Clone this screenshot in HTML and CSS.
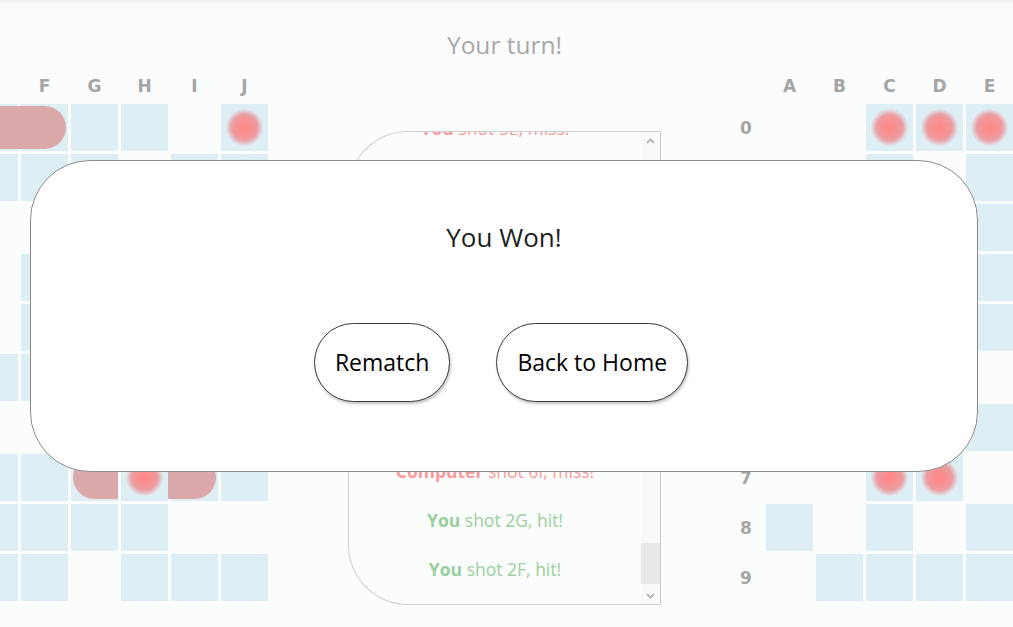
FILE: index.html
```html
<!DOCTYPE html>
<html lang="en">
<head>
<meta charset="utf-8">
<title>Battleship</title>
<link rel="stylesheet" href="styles.css">
</head>
<body>
<div class="topshade"></div>
<h1 class="turn">Your turn!</h1>
<main class="game">
  <section class="board">
    <div class="corner"></div>
    <div class="colh">A</div><div class="colh">B</div><div class="colh">C</div><div class="colh">D</div><div class="colh">E</div><div class="colh">F</div><div class="colh">G</div><div class="colh">H</div><div class="colh">I</div><div class="colh">J</div>
    <div class="rowh">0</div><div class="w"></div><div class="w"></div><div class="s sl"></div><div class="s"></div><div class="s"></div><div class="s sr"></div><div class="w"></div><div class="w"></div><div class="e"></div><div class="h"></div>
    <div class="rowh">1</div><div class="w"></div><div class="e"></div><div class="w"></div><div class="w"></div><div class="w"></div><div class="w"></div><div class="w"></div><div class="e"></div><div class="w"></div><div class="h"></div>
    <div class="rowh">2</div><div class="w"></div><div class="w"></div><div class="e"></div><div class="w"></div><div class="e"></div><div class="e"></div><div class="w"></div><div class="w"></div><div class="w"></div><div class="h"></div>
    <div class="rowh">3</div><div class="w"></div><div class="w"></div><div class="w"></div><div class="e"></div><div class="e"></div><div class="w"></div><div class="w"></div><div class="w"></div><div class="w"></div><div class="w"></div>
    <div class="rowh">4</div><div class="e"></div><div class="w"></div><div class="w"></div><div class="w"></div><div class="e"></div><div class="w"></div><div class="w"></div><div class="s sl"></div><div class="s sr"></div><div class="w"></div>
    <div class="rowh">5</div><div class="w"></div><div class="w"></div><div class="w"></div><div class="w"></div><div class="w"></div><div class="w"></div><div class="w"></div><div class="w"></div><div class="w"></div><div class="w"></div>
    <div class="rowh">6</div><div class="w"></div><div class="e"></div><div class="w"></div><div class="w"></div><div class="e"></div><div class="e"></div><div class="w"></div><div class="w"></div><div class="e"></div><div class="w"></div>
    <div class="rowh">7</div><div class="w"></div><div class="w"></div><div class="w"></div><div class="e"></div><div class="w"></div><div class="w"></div><div class="s sl"></div><div class="h"></div><div class="s sr"></div><div class="w"></div>
    <div class="rowh">8</div><div class="w"></div><div class="w"></div><div class="e"></div><div class="w"></div><div class="w"></div><div class="w"></div><div class="w"></div><div class="w"></div><div class="e"></div><div class="e"></div>
    <div class="rowh">9</div><div class="w"></div><div class="w"></div><div class="w"></div><div class="w"></div><div class="w"></div><div class="w"></div><div class="e"></div><div class="w"></div><div class="w"></div><div class="w"></div>
  </section>

  <section class="log">
    <div class="log-list">
      <p class="hit"><b>You</b> shot 2F, hit!</p>
      <p class="hit"><b>You</b> shot 2G, hit!</p>
      <p class="miss"><b>Computer</b> shot 6I, miss!</p>
      <p class="miss"><b>You</b> shot 7E, miss!</p>
      <p class="hit"><b>You</b> shot 7D, hit!</p>
      <p class="hit"><b>You</b> shot 7C, hit!</p>
      <p class="miss"><b>Computer</b> shot 8I, miss!</p>
      <p class="miss"><b>You</b> shot 9A, miss!</p>
      <p class="miss"><b>Computer</b> shot 8J, miss!</p>
      <p class="miss"><b>You</b> shot 5E, miss!</p>
      <p class="hit"><b>Computer</b> shot 7H, hit!</p>
      <p class="hit"><b>You</b> shot 0E, hit!</p>
      <p class="hit"><b>You</b> shot 0D, hit!</p>
      <p class="miss"><b>Computer</b> shot 6F, miss!</p>
      <p class="hit"><b>You</b> shot 0C, hit!</p>
      <p class="miss"><b>Computer</b> shot 6E, miss!</p>
      <p class="miss"><b>You</b> shot 8D, miss!</p>
      <p class="hit"><b>Computer</b> shot 2J, hit!</p>
      <p class="hit"><b>Computer</b> shot 1J, hit!</p>
      <p class="hit"><b>Computer</b> shot 0J, hit!</p>
      <p class="miss"><b>You</b> shot 8B, miss!</p>
      <p class="miss"><b>Computer</b> shot 0I, miss!</p>
      <p class="miss"><b>You</b> shot 7B, miss!</p>
      <p class="miss"><b>Computer</b> shot 1H, miss!</p>
      <p class="miss"><b>You</b> shot 7A, miss!</p>
      <p class="miss"><b>Computer</b> shot 9G, miss!</p>
      <p class="miss"><b>You</b> shot 9A, miss!</p>
      <p class="miss"><b>Computer</b> shot 2E, miss!</p>
      <p class="miss"><b>You</b> shot 6C, miss!</p>
      <p class="miss"><b>Computer</b> shot 3D, miss!</p>
      <p class="miss"><b>You</b> shot 1D, miss!</p>
      <p class="miss"><b>Computer</b> shot 3E, miss!</p>
      <p class="miss"><b>You</b> shot 1B, miss!</p>
      <p class="miss"><b>Computer</b> shot 4A, miss!</p>
      <p class="miss"><b>You</b> shot 1A, miss!</p>
      <p class="miss"><b>Computer</b> shot 4E, miss!</p>
      <p class="miss"><b>You</b> shot 0B, miss!</p>
      <p class="miss"><b>Computer</b> shot 2C, miss!</p>
      <p class="miss"><b>You</b> shot 0A, miss!</p>
      <p class="miss"><b>Computer</b> shot 1B, miss!</p>
      <p class="miss"><b>You</b> shot 3D, miss!</p>
      <p class="miss"><b>Computer</b> shot 6B, miss!</p>
      <p class="miss"><b>You</b> shot 4F, miss!</p>
      <p class="miss"><b>Computer</b> shot 7D, miss!</p>
      <p class="miss"><b>You</b> shot 5D, miss!</p>
      <p class="miss"><b>Computer</b> shot 8C, miss!</p>
      <p class="miss"><b>You</b> shot 9J, miss!</p>
      <p class="miss"><b>Computer</b> shot 8I, miss!</p>
      <p class="miss"><b>You</b> shot 3H, miss!</p>
      <p class="miss"><b>Computer</b> shot 9G, miss!</p>
      <p class="hit"><b>You</b> shot 5I, hit!</p>
      <p class="hit"><b>You</b> shot 5H, hit!</p>
      <p class="miss"><b>Computer</b> shot 5A, miss!</p>
      <p class="miss"><b>You</b> shot 6G, miss!</p>
      <p class="miss"><b>Computer</b> shot 2I, miss!</p>
      <p class="miss"><b>You</b> shot 8H, miss!</p>
      <p class="miss"><b>Computer</b> shot 3C, miss!</p>
      <p class="hit"><b>You</b> shot 2H, hit!</p>
      <p class="miss"><b>Computer</b> shot 9B, miss!</p>
      <p class="miss"><b>You</b> shot 4B, miss!</p>
      <p class="miss"><b>Computer</b> shot 7A, miss!</p>
      <p class="miss"><b>You</b> shot 2A, miss!</p>
      <p class="miss"><b>Computer</b> shot 5F, miss!</p>
      <p class="miss"><b>You</b> shot 6J, miss!</p>
      <p class="miss"><b>Computer</b> shot 1D, miss!</p>
      <p class="miss"><b>You</b> shot 3J, miss!</p>
      <p class="miss"><b>Computer</b> shot 4D, miss!</p>
      <p class="miss"><b>You</b> shot 8F, miss!</p>
      <p class="miss"><b>Computer</b> shot 0A, miss!</p>
      <p class="miss"><b>You</b> shot 1F, miss!</p>
      <p class="miss"><b>Computer</b> shot 9C, miss!</p>
      <p class="miss"><b>You</b> shot 4I, miss!</p>
      <p class="miss"><b>Computer</b> shot 3G, miss!</p>
      <p class="miss"><b>You</b> shot 0G, miss!</p>
      <p class="miss"><b>Computer</b> shot 6H, miss!</p>
      <p class="miss"><b>You</b> shot 9E, miss!</p>
      <p class="miss"><b>Computer</b> shot 1A, miss!</p>
      <p class="miss"><b>You</b> shot 7I, miss!</p>
      <p class="miss"><b>Computer</b> shot 8B, miss!</p>
      <p class="miss"><b>You</b> shot 3A, miss!</p>
      <p class="miss"><b>Computer</b> shot 4J, miss!</p>
      <p class="miss"><b>You</b> shot 6D, miss!</p>
      <p class="miss"><b>Computer</b> shot 2B, miss!</p>
      <p class="miss"><b>You</b> shot 5B, miss!</p>
      <p class="miss"><b>Computer</b> shot 7F, miss!</p>
      <p class="miss"><b>You</b> shot 2D, miss!</p>
      <p class="miss"><b>Computer</b> shot 5C, miss!</p>
      <p class="miss"><b>You</b> shot 4E, miss!</p>
      <p class="miss"><b>Computer</b> shot 0H, miss!</p>
      <p class="miss"><b>You</b> shot 8G, miss!</p>
      <p class="miss"><b>Computer</b> shot 3I, miss!</p>
      <p class="miss"><b>You</b> shot 1H, miss!</p>
      <p class="miss"><b>Computer</b> shot 9E, miss!</p>
      <p class="miss"><b>You</b> shot 3F, miss!</p>
      <p class="miss"><b>Computer</b> shot 5G, miss!</p>
      <p class="miss"><b>You</b> shot 9H, miss!</p>
      <p class="miss"><b>Computer</b> shot 8A, miss!</p>
      <p class="miss"><b>You</b> shot 6A, miss!</p>
      <p class="miss"><b>Computer</b> shot 1F, miss!</p>
      <p class="miss"><b>You</b> shot 4C, miss!</p>
      <p class="miss"><b>Computer</b> shot 2G, miss!</p>
      <p class="miss"><b>You</b> shot 5J, miss!</p>
    </div>
    <div class="scrollbar" aria-hidden="true">
      <span class="sb-btn"><svg width="9" height="6" viewBox="0 0 9 6"><polyline points="1,5 4.5,1.5 8,5" fill="none" stroke="#b9b9b9" stroke-width="2"/></svg></span>
      <div class="sb-track"><div class="sb-thumb"></div></div>
      <span class="sb-btn"><svg width="9" height="6" viewBox="0 0 9 6"><polyline points="1,1 4.5,4.5 8,1" fill="none" stroke="#b9b9b9" stroke-width="2"/></svg></span>
    </div>
  </section>

  <section class="board right">
    <div class="corner"></div>
    <div class="colh">A</div><div class="colh">B</div><div class="colh">C</div><div class="colh">D</div><div class="colh">E</div><div class="colh">F</div><div class="colh">G</div><div class="colh">H</div><div class="colh">I</div><div class="colh">J</div>
    <div class="rowh">0</div><div class="e"></div><div class="e"></div><div class="h"></div><div class="h"></div><div class="h"></div><div class="w"></div><div class="e"></div><div class="w"></div><div class="w"></div><div class="w"></div>
    <div class="rowh">1</div><div class="e"></div><div class="e"></div><div class="w"></div><div class="e"></div><div class="w"></div><div class="e"></div><div class="w"></div><div class="e"></div><div class="w"></div><div class="w"></div>
    <div class="rowh">2</div><div class="e"></div><div class="w"></div><div class="w"></div><div class="e"></div><div class="w"></div><div class="h"></div><div class="h"></div><div class="h"></div><div class="w"></div><div class="w"></div>
    <div class="rowh">3</div><div class="e"></div><div class="w"></div><div class="w"></div><div class="e"></div><div class="w"></div><div class="e"></div><div class="w"></div><div class="e"></div><div class="w"></div><div class="e"></div>
    <div class="rowh">4</div><div class="w"></div><div class="e"></div><div class="e"></div><div class="w"></div><div class="w"></div><div class="e"></div><div class="w"></div><div class="w"></div><div class="e"></div><div class="w"></div>
    <div class="rowh">5</div><div class="w"></div><div class="e"></div><div class="w"></div><div class="e"></div><div class="e"></div><div class="w"></div><div class="w"></div><div class="h"></div><div class="h"></div><div class="e"></div>
    <div class="rowh">6</div><div class="e"></div><div class="w"></div><div class="e"></div><div class="e"></div><div class="w"></div><div class="w"></div><div class="e"></div><div class="w"></div><div class="w"></div><div class="e"></div>
    <div class="rowh">7</div><div class="e"></div><div class="e"></div><div class="h"></div><div class="h"></div><div class="e"></div><div class="w"></div><div class="w"></div><div class="w"></div><div class="e"></div><div class="w"></div>
    <div class="rowh">8</div><div class="w"></div><div class="e"></div><div class="w"></div><div class="e"></div><div class="w"></div><div class="e"></div><div class="e"></div><div class="w"></div><div class="w"></div><div class="w"></div>
    <div class="rowh">9</div><div class="e"></div><div class="w"></div><div class="w"></div><div class="w"></div><div class="w"></div><div class="w"></div><div class="w"></div><div class="e"></div><div class="e"></div><div class="w"></div>
  </section>
</main>

<div class="modal" role="dialog">
  <h2 class="modal-title">You Won!</h2>
  <div class="actions">
    <button class="btn" type="button">Rematch</button>
    <button class="btn" type="button">Back to Home</button>
  </div>
</div>
</body>
</html>
```

FILE: styles.css
```css
html, body {
  margin: 0;
  padding: 0;
  overflow: hidden;
  height: 100%;
}

body {
  background: #fbfdfc;
  font-family: "Open Sans", "Noto Sans", sans-serif;
}

.topshade {
  height: 6px;
  background: linear-gradient(#eff1f1, #fbfdfc);
}

.turn {
  margin: 0;
  height: 65px;
  box-sizing: border-box;
  padding-top: 24px;
  padding-right: 4px;
  line-height: 30px;
  font-size: 24.5px;
  font-weight: 400;
  color: #a8a8a8;
  text-align: center;
}

.game {
  display: flex;
  align-items: flex-start;
  margin-left: -279px;
  width: max-content;
}

.board {
  flex: none;
  display: grid;
  grid-template-columns: repeat(11, 47px);
  grid-template-rows: 30px repeat(10, 47px);
  gap: 3px;
  margin-right: 80px;
}

.board.right {
  margin-right: 0;
}

.colh,
.rowh {
  font-family: "DejaVu Sans", Verdana, sans-serif;
  font-weight: bold;
  font-size: 17px;
  color: #a5a5a5;
  display: flex;
  align-items: center;
  justify-content: center;
}

.rowh {
  padding-left: 13px;
}

.w {
  background: #deeef5;
}

.e {
  background: transparent;
}

.h {
  background:
    radial-gradient(circle closest-side, #ff8888 0, #f98e8f 25%, #eb9ea2 55%, rgba(222, 238, 245, 0) 80%),
    #deeef5;
}

.s {
  position: relative;
  background: #deeef5;
}

.s::before {
  content: "";
  position: absolute;
  top: 2px;
  bottom: 2px;
  left: -3px;
  right: 0;
  background: #dba9aa;
}

.s.sl::before {
  left: 2px;
  border-radius: 22px 0 0 22px;
}

.s.sr::before {
  right: 2px;
  border-radius: 0 22px 22px 0;
}

.log {
  flex: none;
  width: 313px;
  height: 474px;
  box-sizing: border-box;
  margin-top: 60px;
  margin-right: 55px;
  border: 1px solid #cfcfcf;
  border-right-color: #c8c8c8;
  border-radius: 60px 0 0 60px;
  overflow: hidden;
  display: flex;
}

.log-list {
  flex: 1;
  min-width: 0;
  display: flex;
  flex-direction: column-reverse;
  overflow: hidden;
  padding-bottom: 10px;
}

.log-list p {
  flex: none;
  margin: 0;
  padding: 13px 0;
  line-height: 23px;
  font-size: 17.5px;
  text-align: center;
  white-space: nowrap;
}

.log-list .miss {
  color: #fb9a9a;
}

.log-list .hit {
  color: #9acf9c;
}

.scrollbar {
  flex: none;
  width: 19px;
  display: flex;
  flex-direction: column;
  background: #f9f9f9;
}

.sb-btn {
  flex: none;
  height: 17px;
  display: flex;
  align-items: center;
  justify-content: center;
}

.sb-track {
  flex: 1;
  display: flex;
  flex-direction: column;
  justify-content: flex-end;
  padding-bottom: 3px;
}

.sb-thumb {
  height: 41px;
  background: #e9e9e9;
}

.modal {
  position: fixed;
  left: 30px;
  top: 160px;
  width: 948px;
  height: 312px;
  box-sizing: border-box;
  border: 1px solid #8a8a8a;
  border-radius: 60px;
  background: #ffffff;
  display: flex;
  flex-direction: column;
  align-items: center;
  padding-top: 61px;
}

.modal-title {
  margin: 0;
  font-size: 26px;
  font-weight: 400;
  line-height: 30px;
  color: #1e1e1e;
}

.actions {
  display: flex;
  gap: 46px;
  margin-top: 71px;
  padding-right: 6px;
}

.btn {
  font-family: "Open Sans", "Noto Sans", sans-serif;
  font-size: 23px;
  line-height: 29px;
  padding: 24px 20px;
  border: 1px solid #3a3a3a;
  border-radius: 40px;
  background: #ffffff;
  color: #000000;
  box-shadow: 1px 2px 3px rgba(0, 0, 0, 0.25);
  cursor: pointer;
}
```
